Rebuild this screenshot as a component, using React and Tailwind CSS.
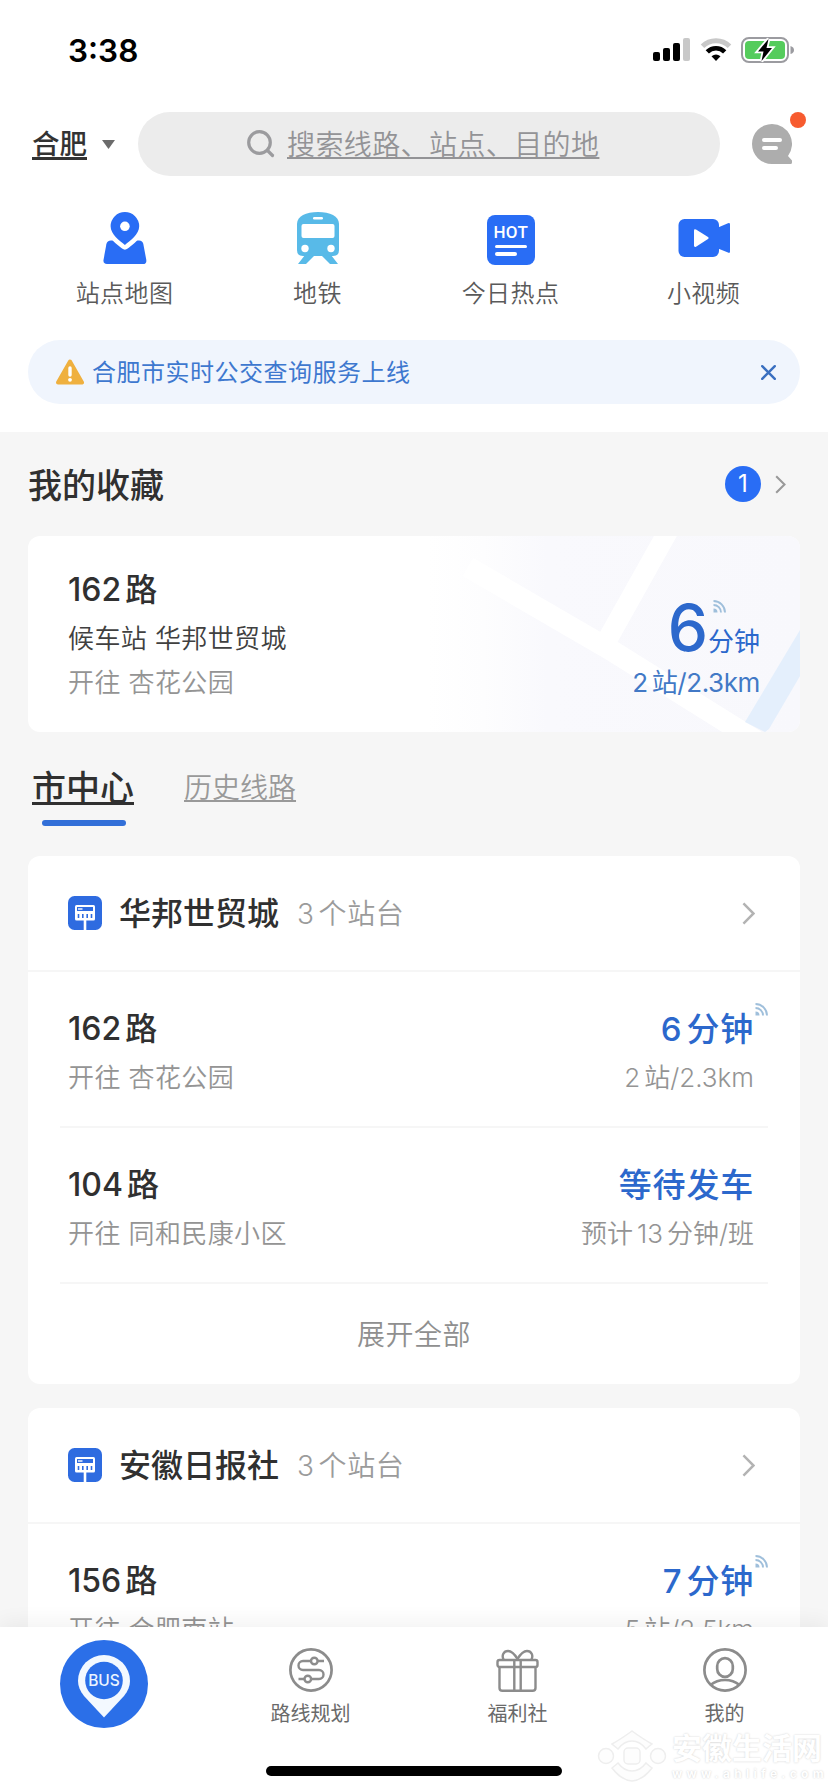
import React from 'react';

const shortcuts = [
  { label: '站点地图', icon: MapPinIcon },
  { label: '地铁', icon: MetroIcon },
  { label: '今日热点', icon: HotIcon },
  { label: '小视频', icon: VideoIcon },
];

function SignalIcon() {
  return (
    <svg width="38" height="24" viewBox="0 0 38 24">
      <rect x="0" y="14" width="7" height="9" rx="2" />
      <rect x="10" y="10" width="7" height="13" rx="2" />
      <rect x="20" y="5" width="7" height="18" rx="2" />
      <rect x="30" y="0" width="7" height="23" rx="2" fill="#c8c8c8" />
    </svg>
  );
}

function WifiIcon() {
  return (
    <svg width="32" height="24" viewBox="0 0 32 24" fill="none" strokeWidth="5">
      <path d="M2.5 8.3 A19 19 0 0 1 29.5 8.3" stroke="#c8c8c8" />
      <path d="M7.3 13.8 A12.3 12.3 0 0 1 24.7 13.8" stroke="#000" strokeWidth="4.6" />
      <path d="M11.5 18.3 Q16 14.8 20.5 18.3 L16 23Z" fill="#000" />
    </svg>
  );
}

function BatteryIcon() {
  return (
    <svg width="54" height="26" viewBox="0 0 54 26">
      <rect x="1" y="1" width="46" height="24" rx="7" fill="none" stroke="#9b9ba0" strokeWidth="2" />
      <rect x="4" y="4" width="40" height="18" rx="4" fill="#55cc5c" />
      <path d="M49.5 9 Q53 10 53 13 T49.5 17Z" fill="#9b9ba0" />
      <path d="M27.5 2 L17 14.5 H22.5 L20.5 24 L31 11 H25.5Z" fill="#000" stroke="#fff" strokeWidth="3.6" paintOrder="stroke" />
    </svg>
  );
}

function SearchIcon() {
  return (
    <svg width="28" height="28" viewBox="0 0 28 28" fill="none" stroke="#9b9b9e" strokeWidth="3.2" strokeLinecap="round">
      <circle cx="12.5" cy="12.5" r="10.8" />
      <path d="M20.5 20.5 L25.5 25.5" />
    </svg>
  );
}

function MessageIcon() {
  return (
    <svg width="40" height="40" viewBox="0 0 40 40">
      <path d="M20 0 A20 20 0 1 0 20 40 H38.5 Q40 40 40 38.5 V36.5 L36 32 A20 20 0 0 0 20 0Z" fill="#adadad" />
      <path d="M12 16 H28 M12 24 H24" stroke="#fff" strokeWidth="4" strokeLinecap="round" />
    </svg>
  );
}

function MapPinIcon() {
  return (
    <svg width="44" height="54" viewBox="0 0 44 54" fill="#296df5">
      <path d="M8 29.5 H36 Q39.6 29.5 40.3 33 L43.3 49 Q43.8 53 40 53 H4 Q0 53 .5 49 L3.4 33 Q4.2 29.5 8 29.5Z" />
      <path
        d="M21.9 34 C17 30 7.6 23.5 7.6 15.3 A14.3 14.3 0 1 1 36.2 15.3 C36.2 23.5 26.8 30 21.9 34Z"
        stroke="#fff"
        strokeWidth="9"
        strokeLinejoin="round"
        paintOrder="stroke"
      />
      <circle cx="21.9" cy="15.3" r="4.8" fill="#fff" />
    </svg>
  );
}

function MetroIcon() {
  return (
    <svg width="42" height="54" viewBox="0 0 42 54" fill="#58bae8">
      <path d="M0 13 C0 5 9 1 21 1 S42 5 42 13 V39 Q42 45 36 45 H6 Q0 45 0 39Z" />
      <path d="M8 44 L1 53 H9 L17 45Z M34 44 L41 53 H33 L25 45Z" />
      <rect x="16" y="6" width="10" height="2.4" rx="1.2" fill="#fff" />
      <rect x="4.5" y="13" width="33" height="14" rx="2" fill="#fff" />
      <circle cx="8" cy="37.5" r="3.7" fill="#fff" />
      <circle cx="34" cy="37.5" r="3.7" fill="#fff" />
    </svg>
  );
}

function HotIcon() {
  return (
    <div className="flex h-[50px] w-12 flex-col rounded-lg bg-[#296df5] pl-[7px] pt-[9px]">
      <span className="h-[17px] font-['Roboto'] text-[17px] font-medium leading-[17px] tracking-[0.3px] text-white">HOT</span>
      <span className="ml-px mt-[4px] h-[3px] w-8 rounded-full bg-white" />
      <span className="ml-px mt-[4px] h-[4px] w-[22px] rounded-full bg-white" />
    </div>
  );
}

function VideoIcon() {
  return (
    <svg width="52" height="54" viewBox="0 0 52 54" fill="#296df5">
      <rect x="0.5" y="8" width="40.5" height="38" rx="6" />
      <path d="M40 16.5 L50 12.3 Q52 11.5 52 13.5 V40.5 Q52 42.5 50 41.6 L40 37.5Z" />
      <path d="M16 19.5 Q16 17.5 18 18.5 L30 26 Q31.5 27 30 28 L18 35.8 Q16 36.5 16 34.5Z" fill="#fff" />
    </svg>
  );
}

function WarningIcon() {
  return (
    <svg width="28" height="26" viewBox="0 0 28 26">
      <path d="M14 2.5 L26 23.5 H2Z" fill="#efb03f" stroke="#efb03f" strokeWidth="4" strokeLinejoin="round" />
      <path d="M14 9 V16" stroke="#fff" strokeWidth="3.4" strokeLinecap="round" />
      <circle cx="14" cy="20.8" r="1.9" fill="#fff" />
    </svg>
  );
}

function LiveIcon() {
  return (
    <svg width="13" height="13" viewBox="0 0 13 13" fill="none" stroke="#9fbfdb" strokeWidth="1.9">
      <path d="M0.5 1 A11.5 11.5 0 0 1 12 12.5" />
      <path d="M0.5 5 A7.5 7.5 0 0 1 8 12.5" />
      <path d="M0.5 8.5 A4 4 0 0 1 4.5 12.5 H0.5Z" fill="#9fbfdb" stroke="none" />
    </svg>
  );
}

function ChevronIcon({ size = 23, color = '#b3b3b3' }) {
  return (
    <svg width={(size * 14) / 24} height={size} viewBox="0 0 14 24" fill="none" stroke={color} strokeWidth="2.6">
      <path d="M1.5 1.5 L12 12 L1.5 22.5" />
    </svg>
  );
}

function StopIcon() {
  return (
    <svg width="34" height="34" viewBox="0 0 34 34">
      <rect width="34" height="34" rx="6.5" fill="#2e6be0" />
      <rect x="7" y="9" width="20" height="15.5" rx="1.5" fill="#fff" />
      <rect x="9" y="11" width="16" height="4" fill="#2e6be0" />
      <path d="M10 13 H14.5" stroke="#fff" strokeWidth="1.4" />
      <path d="M10.500 18 V22 M14.800 18 V22 M19.200 18 V22 M23.500 18 V22" stroke="#2e6be0" strokeWidth="1.6" />
      <path d="M17 24 V34" stroke="#fff" strokeWidth="2.6" />
    </svg>
  );
}

function RouteIcon() {
  return (
    <svg width="44" height="44" viewBox="0 0 44 44" fill="none" stroke="#8c8c8c" strokeWidth="2.4">
      <circle cx="22" cy="22" r="20.6" strokeWidth="2.7" />
      <path d="M35 13 H28.5 M22 13 H14 A4.4 4.4 0 0 0 14 22 H30 A4.4 4.4 0 0 1 30 31 H22 M15.5 31 H9.5" />
      <circle cx="25.3" cy="13" r="3.3" />
      <circle cx="18.8" cy="31" r="3.3" />
    </svg>
  );
}

function GiftIcon() {
  return (
    <svg width="44" height="44" viewBox="0 0 44 44" fill="none" stroke="#8c8c8c" strokeWidth="2.4" strokeLinejoin="round">
      <rect x="1.5" y="12" width="40" height="7" rx="2" />
      <path d="M3.5 19 V40 Q3.5 42.8 6.5 42.8 H36.5 Q39.500 42.800 39.500 40 V19" />
      <path d="M18.300 12 V43 M24.700 12 V43" />
      <path d="M21.500 11 C18.500 6 15.500 3 12 3 C7.500 3 5.500 7.500 7.500 11.500 M21.500 11 C24.500 6 27.500 3 31 3 C35.500 3 37.500 7.500 35.500 11.500" />
    </svg>
  );
}

function UserIcon() {
  return (
    <svg width="44" height="44" viewBox="0 0 44 44" fill="none" stroke="#8c8c8c" strokeWidth="2.7">
      <circle cx="22" cy="22" r="20.6" />
      <rect x="14.2" y="10.2" width="15.600" height="18.600" rx="7.800" />
      <path d="M7.500 37 Q13.500 32 22 32 T36.500 37" />
    </svg>
  );
}

function BusIcon() {
  return (
    <svg width="88" height="88" viewBox="0 0 88 88">
      <circle cx="44" cy="44" r="44" fill="#2b6fe8" />
      <path d="M44 77.5 L24 56 C20 51 18 46 18 41 A26 26 0 0 1 70 41 C70 46 68 51 64 56Z" fill="#f3f9ff" />
      <circle cx="44" cy="40.5" r="18.8" fill="#2b6fe8" />
      <text x="44" y="46" textAnchor="middle" fontFamily="Inter" fontSize="15.500" fontWeight="500" fill="#eaf4ff">BUS</text>
    </svg>
  );
}

// latin digits followed by a chinese unit, with a small gap between them
function Mixed({ num, unit }) {
  return (
    <>
      {num}
      <span className="ml-1">{unit}</span>
    </>
  );
}

function RouteRow({ num, dest, eta, info, live }) {
  return (
    <div className="flex h-[154px] justify-between pl-10 pr-[46px] pt-9">
      <div>
        <p className="text-[32px] font-medium leading-[42px] text-[#303030]"><Mixed num={num} unit="路" /></p>
        <p className="mt-[10px] text-[26px] font-[350] leading-9 tracking-[0.4px] text-[#949494]">开往 {dest}</p>
      </div>
      <div className="text-right">
        <p className="relative text-[33px] font-medium leading-[42px] tracking-[0.8px] text-[#2c68cc]">
          {eta}
          {live && <span className="absolute -right-[14px] -top-[5px] leading-none"><LiveIcon /></span>}
        </p>
        <p className="mt-[10px] text-[26px] font-[350] leading-9 text-[#949494]">{info}</p>
      </div>
    </div>
  );
}

function StationHeader({ name }) {
  return (
    <div className="flex h-[116px] items-center border-b-2 border-[#f6f6f6] pl-10 pr-[45px]">
      <StopIcon />
      <h2 className="ml-[17px] mt-[2px] text-[32px] font-medium leading-10 text-[#303030]">{name}</h2>
      <span className="ml-[18px] mt-[2px] text-[28px] font-[350] leading-10 tracking-[0.6px] text-[#9b9b9b]"><Mixed num="3" unit="个站台" /></span>
      <span className="ml-auto"><ChevronIcon /></span>
    </div>
  );
}

function TabItem({ icon: Icon, label }) {
  return (
    <div className="flex flex-col items-center pt-[21px]">
      <Icon />
      <span className="mt-[8px] text-xl leading-7 text-[#6a6a6a]">{label}</span>
    </div>
  );
}

export default function App() {
  return (
    <div className="relative flex h-[1792px] w-[828px] flex-col overflow-hidden bg-[#f6f6f6] font-['Inter','Noto_Sans_CJK_SC',sans-serif]">
      <header className="h-[432px] shrink-0 bg-white">
        {/* status bar */}
        <div className="flex h-[112px] items-start pl-[68px] pr-[33px]">
          <span className="mt-[31px] text-[31.5px] font-semibold leading-10 text-black">3:38</span>
          <div className="ml-auto mt-[37px] flex items-center">
            <SignalIcon />
            <span className="ml-[9px]"><WifiIcon /></span>
            <span className="ml-[9px]"><BatteryIcon /></span>
          </div>
        </div>

        <div className="flex h-16 items-center pl-8">
          <span className="w-[56px] whitespace-nowrap text-[27.5px] font-medium leading-10 text-[#333] underline decoration-[3px] underline-offset-[3px]">合肥</span>
          <svg className="ml-[14px]" width="13" height="9" viewBox="0 0 13 9"><path d="M0 0 H13 L6.5 9Z" fill="#6b6b6b" /></svg>
          <div className="ml-[23px] flex h-16 w-[582px] items-center rounded-full bg-[#ececec] pl-[109px]">
            <SearchIcon />
            <span className="ml-[12px] mt-px text-[28px] font-[350] leading-10 tracking-[0.4px] text-[#939396] underline decoration-2 underline-offset-[2px]">搜索线路、站点、目的地</span>
          </div>
          <div className="relative ml-8">
            <MessageIcon />
            <span className="absolute -right-[14px] -top-[12px] h-4 w-4 rounded-full bg-[#f75b2f]" />
          </div>
        </div>

        <div className="grid grid-cols-4 px-7 pt-[35px]">
          {shortcuts.map(({ label, icon: Icon }) => (
            <div key={label} className="flex flex-col items-center">
              <div className="flex h-[54px] items-end"><Icon /></div>
              <span className="mt-[11px] text-2xl font-[350] leading-9 tracking-[0.4px] text-[#5a5a5a]">{label}</span>
            </div>
          ))}
        </div>

        <div className="mx-7 mt-[28px] flex h-16 items-center rounded-full bg-[#f0f5fd] pl-7 pr-6">
          <WarningIcon />
          <span className="ml-2 mt-[2px] text-2xl leading-9 tracking-[0.5px] text-[#3e78cf]">合肥市实时公交查询服务上线</span>
          <svg className="ml-auto" width="15" height="15" viewBox="0 0 15 15" stroke="#3a6fc0" strokeWidth="2.4" strokeLinecap="round">
            <path d="M1.2 1.2 L13.8 13.8 M13.8 1.2 L1.2 13.8" />
          </svg>
        </div>
      </header>

      <main className="min-h-0 flex-1 overflow-hidden px-7">
        <div className="flex h-[104px] items-center">
          <h1 className="mt-[3px] text-[34px] font-medium leading-10 text-[#303030]">我的收藏</h1>
          <span className="ml-auto flex h-9 w-9 items-center justify-center rounded-full bg-[#296df5] text-[24px] leading-none text-white">1</span>
          <span className="ml-[14px] mr-[14px]"><ChevronIcon size={19} color="#999" /></span>
        </div>

        {/* favourite line */}
        <section className="relative h-[196px] overflow-hidden rounded-xl bg-white">
          <svg className="absolute right-0 top-0" width="372" height="196" viewBox="400 0 372 196">
            <defs>
              <linearGradient id="mapFade" x1="0" x2="1" y1="0" y2="0">
                <stop offset="0" stopColor="#fff" />
                <stop offset="0.15" stopColor="#fdfdfe" />
                <stop offset="0.32" stopColor="#f9f9fd" />
                <stop offset="1" stopColor="#f8f8fc" />
              </linearGradient>
            </defs>
            <rect x="400" width="372" height="196" fill="url(#mapFade)" />
            <path d="M440 31 L586 116 L730 206" fill="none" stroke="#fff" strokeWidth="21" />
            <path d="M643 -10 L573 115" stroke="#fff" strokeWidth="20" />
            <path d="M772 94 L717 186 L737 196 L741 193 L772 140Z" fill="#e4effc" />
          </svg>
          <div className="relative flex justify-between pl-10 pr-10 pt-[33px]">
            <div>
              <p className="text-[32px] font-medium leading-[42px] text-[#303030]"><Mixed num="162" unit="路" /></p>
              <p className="mt-[10px] text-[26px] font-[350] leading-9 tracking-[0.4px] text-[#404040]">候车站 华邦世贸城</p>
              <p className="mt-2 text-[26px] font-[350] leading-9 tracking-[0.4px] text-[#949494]">开往 杏花公园</p>
            </div>
            <div className="text-right text-[#2c68cc]">
              <p className="relative mt-[29px] h-[60px] whitespace-nowrap leading-[60px]">
                <span className="text-[64px] font-medium">6</span>
                <span className="text-[26px]">分钟</span>
                <span className="absolute right-[34px] top-[2px]"><LiveIcon /></span>
              </p>
              <p className="mt-[7px] text-[26px] leading-9 tracking-[-0.4px] text-[#4279c6]"><Mixed num="2" unit="站/2.3km" /></p>
            </div>
          </div>
        </section>

        <div className="flex h-[124px] pl-1 pt-[35px]">
          <div className="w-[102px]">
            <span className="block whitespace-nowrap text-[34px] font-medium leading-[42px] text-[#303030] underline decoration-[3px] underline-offset-[2px]">市中心</span>
            <span className="ml-[10px] mt-[11px] block h-[6px] w-[84px] rounded-full bg-[#326fd8]" />
          </div>
          <span className="ml-[50px] text-[28px] font-[350] leading-[42px] text-[#999] underline decoration-2 underline-offset-[2px]">历史线路</span>
        </div>

        <section className="h-[528px] rounded-xl bg-white">
          <StationHeader name="华邦世贸城" />
          <RouteRow num="162" dest="杏花公园" eta={<Mixed num="6" unit="分钟" />} info={<Mixed num="2" unit="站/2.3km" />} live />
          <div className="mx-8 h-[2px] bg-[#f6f6f6]" />
          <RouteRow num="104" dest="同和民康小区" eta="等待发车" info={<>预计<span className="ml-1">13</span><span className="ml-1">分钟/班</span></>} />
          <div className="mx-8 h-[2px] bg-[#f6f6f6]" />
          <div className="flex h-[102px] items-center justify-center text-[28px] font-[350] tracking-[0.5px] text-[#8f8f8f]">展开全部</div>
        </section>

        <section className="mt-6 rounded-xl bg-white">
          <StationHeader name="安徽日报社" />
          <RouteRow num="156" dest="合肥南站" eta={<Mixed num="7" unit="分钟" />} info={<Mixed num="5" unit="站/2.5km" />} live />
        </section>
      </main>

      <nav className="relative h-[165px] shrink-0 bg-white shadow-[0_-4px_20px_rgba(0,0,0,0.06)]">
        <div className="grid grid-cols-4">
          <div className="flex justify-center pt-[13px]"><BusIcon /></div>
          <TabItem icon={RouteIcon} label="路线规划" />
          <TabItem icon={GiftIcon} label="福利社" />
          <TabItem icon={UserIcon} label="我的" />
        </div>
        <div className="absolute bottom-4 left-[266px] h-[10px] w-[296px] rounded-full bg-black" />

        {/* site watermark */}
        <div className="absolute bottom-[9px] right-[4px] flex items-center gap-[5px] text-white [text-shadow:0_0_2px_#ccc]">
          <svg width="70" height="54" viewBox="0 0 70 54" fill="#fdfdfd" stroke="#eee" strokeWidth="1.5">
            <circle cx="9" cy="27" r="7.5" />
            <circle cx="61" cy="27" r="7.5" />
            <path d="M15 15 Q24 10 35 2 Q46 10 55 15 Q50 19 49 20 Q43 12 35 12 T21 20Z" />
            <path d="M15 39 Q24 51 35 52 Q46 51 55 39 Q50 35 49 34 Q43 42 35 42 T21 34Z" />
            <rect x="27" y="19" width="16" height="16" rx="4" />
          </svg>
          <div className="w-[152px]">
            <p className="whitespace-nowrap text-[30px] font-bold leading-[36px]">安徽生活网</p>
            <p className="whitespace-nowrap text-[12px] font-bold leading-[16px] tracking-[4.3px]">www.ahlife.com</p>
          </div>
        </div>
      </nav>
    </div>
  );
}
